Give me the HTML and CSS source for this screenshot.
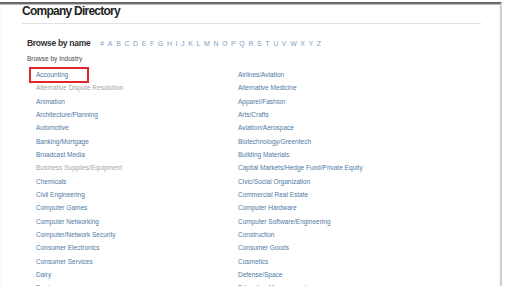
FILE: index.html
```html
<!DOCTYPE html>
<html lang="en">
<head>
<meta charset="utf-8">
<title>Company Directory</title>
<link rel="stylesheet" href="styles.css">
</head>
<body>
<div class="frame">
  <h1 class="title">Company Directory</h1>
  <div class="rule"></div>
  <div class="browse-name">
    <span class="browse-label">Browse by name</span>
    <nav class="letters">
      <a>#</a><a>A</a><a>B</a><a>C</a><a>D</a><a>E</a><a>F</a><a>G</a><a>H</a><a>I</a><a>J</a><a>K</a><a>L</a><a>M</a><a>N</a><a>O</a><a>P</a><a>Q</a><a>R</a><a>S</a><a>T</a><a>U</a><a>V</a><a>W</a><a>X</a><a>Y</a><a>Z</a>
    </nav>
  </div>
  <div class="industry-label">Browse by Industry</div>
  <ul class="industries">
    <li class="item highlighted"><a>Accounting</a></li>
    <li class="item"><a>Airlines/Aviation</a></li>
    <li class="item muted"><a>Alternative Dispute Resolution</a></li>
    <li class="item"><a>Alternative Medicine</a></li>
    <li class="item"><a>Animation</a></li>
    <li class="item"><a>Apparel/Fashion</a></li>
    <li class="item"><a>Architecture/Planning</a></li>
    <li class="item"><a>Arts/Crafts</a></li>
    <li class="item"><a>Automotive</a></li>
    <li class="item"><a>Aviation/Aerospace</a></li>
    <li class="item"><a>Banking/Mortgage</a></li>
    <li class="item"><a>Biotechnology/Greentech</a></li>
    <li class="item"><a>Broadcast Media</a></li>
    <li class="item"><a>Building Materials</a></li>
    <li class="item muted"><a>Business Supplies/Equipment</a></li>
    <li class="item"><a>Capital Markets/Hedge Fund/Private Equity</a></li>
    <li class="item"><a>Chemicals</a></li>
    <li class="item"><a>Civic/Social Organization</a></li>
    <li class="item"><a>Civil Engineering</a></li>
    <li class="item"><a>Commercial Real Estate</a></li>
    <li class="item"><a>Computer Games</a></li>
    <li class="item"><a>Computer Hardware</a></li>
    <li class="item"><a>Computer Networking</a></li>
    <li class="item"><a>Computer Software/Engineering</a></li>
    <li class="item"><a>Computer/Network Security</a></li>
    <li class="item"><a>Construction</a></li>
    <li class="item"><a>Consumer Electronics</a></li>
    <li class="item"><a>Consumer Goods</a></li>
    <li class="item"><a>Consumer Services</a></li>
    <li class="item"><a>Cosmetics</a></li>
    <li class="item"><a>Dairy</a></li>
    <li class="item"><a>Defense/Space</a></li>
    <li class="item"><a>Design</a></li>
    <li class="item"><a>Education Management</a></li>
  </ul>
</div>
</body>
</html>
```
FILE: styles.css
```css
html, body {
  margin: 0;
  padding: 0;
  background: #ffffff;
}
body {
  font-family: "Liberation Sans", Arial, sans-serif;
}
.frame {
  margin-top: 2px;
  width: 500px;
  height: 282px;
  border-top: 2px solid #6a6a6a;
  border-right: 2px solid #cfcfcf;
  box-shadow: inset 0 1px 1px #b8b8b8;
  overflow: hidden;
  box-sizing: content-box;
}
.title {
  margin: 0 0 0 22px;
  font-size: 12px;
  line-height: 14px;
  font-weight: bold;
  color: #222;
  letter-spacing: -0.75px;
}
.rule {
  margin: 5px 0 0 22px;
  width: 459px;
  height: 1px;
  background: #e2e2e2;
}
.browse-name {
  display: flex;
  align-items: center;
  margin: 13px 0 0 27px;
  height: 12px;
}
.browse-label {
  font-size: 8.5px;
  font-weight: bold;
  color: #333;
  letter-spacing: -0.3px;
}
.letters {
  display: flex;
  gap: 3.6px;
  margin-left: 10px;
  font-size: 7px;
  color: #7f9fc2;
}
.letters a {
  display: block;
}
.industry-label {
  margin: 5px 0 0 27px;
  font-size: 6.5px;
  line-height: 10px;
  color: #4a4a4a;
}
.industries {
  list-style: none;
  margin: 4px 0 0 36px;
  padding: 0;
  display: grid;
  grid-template-columns: 202px 202px;
  grid-auto-rows: 13.33px;
  font-size: 6.5px;
  color: #4e79a4;
}
.item {
  display: flex;
  align-items: center;
  white-space: nowrap;
}
.item.muted {
  color: #a5a5a5;
}
.highlighted {
  position: relative;
}
.highlighted::after {
  content: "";
  position: absolute;
  left: -7px;
  top: -1px;
  width: 56px;
  height: 12px;
  border: 2px solid #e1272c;
}
```
